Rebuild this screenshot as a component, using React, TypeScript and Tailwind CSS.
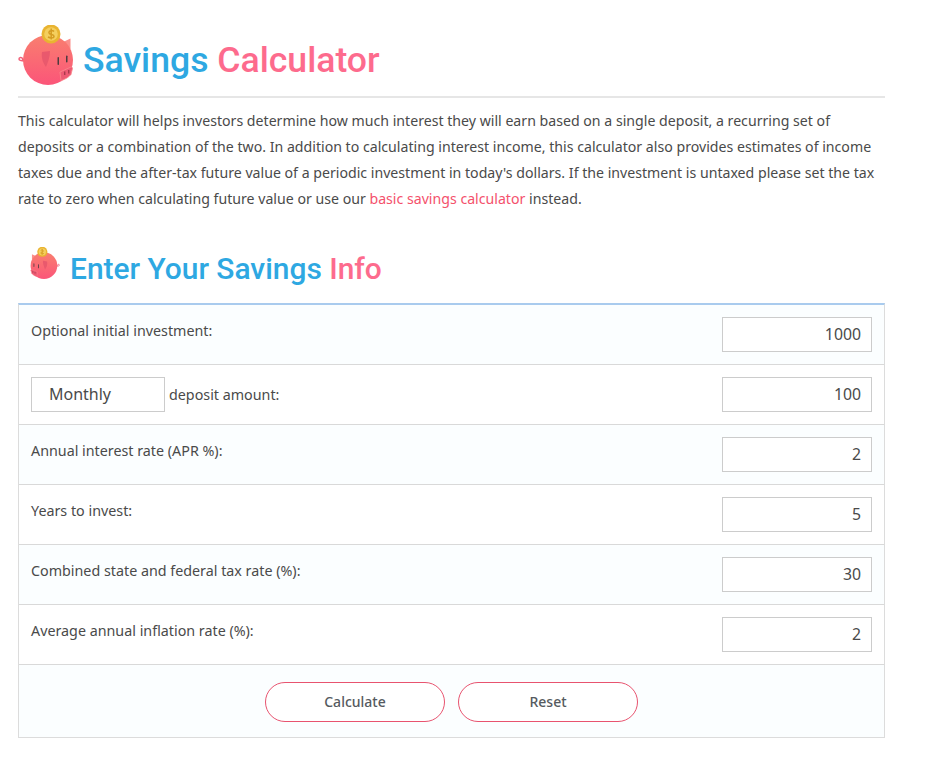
const PigIcon = ({ className, gradientId, flip }: { className: string; gradientId: string; flip?: boolean }) => (
  <svg viewBox="18 26 56 60" className={className}>
    <defs>
      <linearGradient id={gradientId} x1="0" y1="0" x2="0" y2="1">
        <stop offset="0" stopColor="#f97f6f" />
        <stop offset="1" stopColor="#fb5579" />
      </linearGradient>
    </defs>
    <g transform={flip ? 'translate(92 0) scale(-1 1)' : undefined}>
      <path d="M25 62c-3 0-6 0-6-2s3-2 3.500-.5-1 2 2 1" fill="none" stroke="#f2627a" strokeWidth="1.500" />
      <path d="M63 43l7.500-3.500v11z" fill="#fb8f8c" />
      <circle cx="48" cy="61" r="25" fill={`url(#${gradientId})`} />
      <circle cx="51" cy="35" r="9.500" fill="#e9b431" />
      <circle cx="51" cy="35" r="6.800" fill="#f4cf5e" />
      <path d="M54 32.500c-1.500-1.500-5.500-1-5 1.300s5 1.200 5 3.400-4 2-6 .8M51.200 29.500v11" fill="none" stroke="#d59c22" strokeWidth="1.500" />
      <path d="M42 53l8-1c0 6-2 11-4 16-3-4-5-9-4-15z" fill="#e9596d" />
      <rect x="57.500" y="58" width="1.500" height="8" rx=".75" fill="#4d3b3f" />
      <rect x="66" y="56.500" width="1.500" height="7" rx=".75" fill="#4d3b3f" />
      <path d="M60 73l11-5c1 0 1.500.5 1.500 1.500l-1.500 6c-2.500 3-6 5-10 6z" fill="#ee5a74" stroke="#fa8a8c" strokeWidth=".8" />
      <rect x="64" y="72.500" width="1.400" height="3.500" fill="#a93a4c" />
      <rect x="68" y="71" width="1.400" height="3.500" fill="#a93a4c" />
    </g>
  </svg>
)

const rows = [
  { label: 'Optional initial investment:', value: '1000' },
  { label: 'deposit amount:', value: '100', select: true },
  { label: 'Annual interest rate (APR %):', value: '2' },
  { label: 'Years to invest:', value: '5' },
  { label: 'Combined state and federal tax rate (%):', value: '30' },
  { label: 'Average annual inflation rate (%):', value: '2' },
]

export default function App() {
  return (
    <div className="font-['Noto_Sans',sans-serif] bg-white h-[761px] overflow-hidden pl-[18px] text-[#4a4a4a]">
      <div className="w-[867px]">
        <div className="flex items-end h-[98px] border-b-2 border-[#e6e6e6] pb-[15px]">
          <PigIcon className="w-[56px] h-[60px] shrink-0 -mb-[4px]" gradientId="pigA" />
          <h1 className="text-[35.6px] leading-[42px] font-['Roboto',sans-serif] font-medium text-[#2ea8e2] ml-[9px] whitespace-nowrap">
            Savings <span className="text-[#fd6b8d]">Calculator</span>
          </h1>
        </div>

        <p className="mt-[10px] text-[14.15px] leading-[26px]">
          This calculator will helps investors determine how much interest they will earn based on a single deposit, a recurring set of deposits or a combination of the two. In addition to calculating interest income, this calculator also provides estimates of income taxes due and the after-tax future value of a periodic investment in today's dollars. If the investment is untaxed please set the tax rate to zero when calculating future value or use our{' '}
          <a className="text-[#f4516c]">basic savings calculator</a> instead.
        </p>

        <div className="flex items-center mt-[39px] pl-[12px] h-[36px]">
          <PigIcon className="w-[30px] h-[32px] shrink-0 -mt-[12px]" gradientId="pigB" flip />
          <h2 className="text-[29.9px] leading-[36px] font-['Roboto',sans-serif] font-medium text-[#2ea8e2] ml-[10px] whitespace-nowrap">
            Enter Your Savings <span className="text-[#fd6b8d]">Info</span>
          </h2>
        </div>

        <div className="mt-[16px] border-t-2 border-[#a9cbee] border-x border-x-[#dcdcdc] border-b border-b-[#dcdcdc]">
          {rows.map((row, i) => (
            <div
              key={row.value + i}
              className={`flex justify-between h-[60px] border-b border-[#d9d9d9] px-[12px] ${i % 2 === 0 ? 'bg-[#fbfeff]' : 'bg-white'}`}
            >
              {row.select ? (
                <div className="flex items-center gap-[4px] text-[14.3px] -mt-[1px]">
                  <select className="appearance-none w-[134px] h-[35px] border border-[#cccccc] bg-white pl-[17px] text-[16px] text-[#4a4a4a] rounded-none">
                    <option>Monthly</option>
                  </select>
                  <span className="pt-[2px]">{row.label}</span>
                </div>
              ) : (
                <div className="text-[14.3px] leading-[20px] pt-[16px]">{row.label}</div>
              )}
              <input
                readOnly
                value={row.value}
                className="w-[150px] h-[35px] mt-[12px] border border-[#cccccc] bg-white pr-[10px] pb-[1px] text-right text-[15.8px] text-[#4a4a4a]"
              />
            </div>
          ))}
          <div className="flex justify-center gap-[13px] h-[72px] bg-[#fbfeff] pt-[17px]">
            <button className="w-[180px] h-[40px] pb-[1px] rounded-full border border-[#e8536f] bg-white text-[14px] font-medium text-[#555a60]">Calculate</button>
            <button className="w-[180px] h-[40px] pb-[1px] rounded-full border border-[#e8536f] bg-white text-[14px] font-medium text-[#555a60]">Reset</button>
          </div>
        </div>
      </div>
    </div>
  )
}
